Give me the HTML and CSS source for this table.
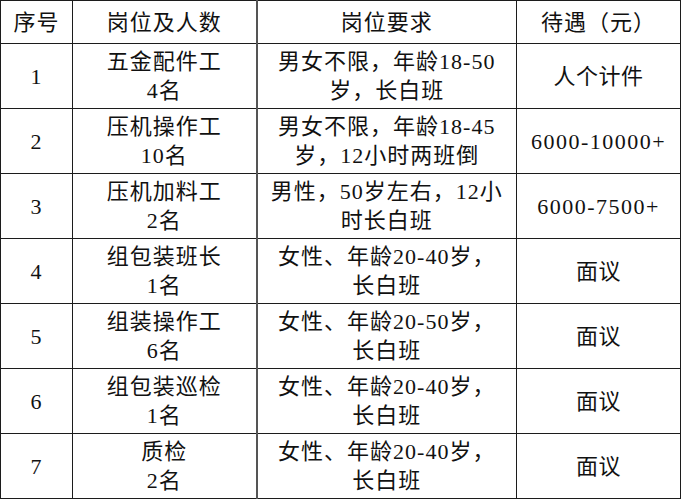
FILE: index.html
```html
<!DOCTYPE html>
<html lang="zh-CN">
<head>
<meta charset="utf-8">
<title>岗位表</title>
<link rel="stylesheet" href="styles.css">
</head>
<body>
<table class="jobs">
  <colgroup>
    <col class="c-no">
    <col class="c-pos">
    <col class="c-req">
    <col class="c-pay">
  </colgroup>
  <thead>
    <tr class="head">
      <th>序号</th>
      <th>岗位及人数</th>
      <th class="req">岗位要求</th>
      <th>待遇（元）</th>
    </tr>
  </thead>
  <tbody>
    <tr>
      <td>1</td>
      <td>五金配件工<br>4名</td>
      <td class="req">男女不限，年龄18-50<br>岁，长白班</td>
      <td class="pay">人个计件</td>
    </tr>
    <tr>
      <td>2</td>
      <td>压机操作工<br>10名</td>
      <td class="req">男女不限，年龄18-45<br>岁，12小时两班倒</td>
      <td class="pay num">6000-10000+</td>
    </tr>
    <tr>
      <td>3</td>
      <td>压机加料工<br>2名</td>
      <td class="req">男性，50岁左右，12小<br>时长白班</td>
      <td class="pay num">6000-7500+</td>
    </tr>
    <tr>
      <td>4</td>
      <td>组包装班长<br>1名</td>
      <td class="req">女性、年龄20-40岁，<br>长白班</td>
      <td class="pay">面议</td>
    </tr>
    <tr>
      <td>5</td>
      <td>组装操作工<br>6名</td>
      <td class="req">女性、年龄20-50岁，<br>长白班</td>
      <td class="pay">面议</td>
    </tr>
    <tr>
      <td>6</td>
      <td>组包装巡检<br>1名</td>
      <td class="req">女性、年龄20-40岁，<br>长白班</td>
      <td class="pay">面议</td>
    </tr>
    <tr>
      <td>7</td>
      <td>质检<br>2名</td>
      <td class="req">女性、年龄20-40岁，<br>长白班</td>
      <td class="pay">面议</td>
    </tr>
  </tbody>
</table>
</body>
</html>
```
FILE: styles.css
```css
html, body {
  margin: 0;
  padding: 0;
  background: #ffffff;
}

.jobs {
  table-layout: fixed;
  border-collapse: collapse;
  width: 680px;
  font-family: "Liberation Serif", "Noto Sans CJK SC", serif;
  font-size: 22px;
  line-height: 29px;
  color: #111111;
}

.c-no { width: 72px; }
.c-pos { width: 184px; }
.c-req { width: 260px; }
.c-pay { width: 164px; }

.jobs th,
.jobs td {
  border: 1px solid #1c1c1c;
  padding: 0;
  text-align: center;
  vertical-align: middle;
  white-space: nowrap;
  letter-spacing: 1px;
  font-weight: normal;
}

.jobs .req {
  border-left: 2px solid #555555;
}

.jobs .pay {
  letter-spacing: 0.5px;
}

.jobs .num {
  letter-spacing: 1.5px;
}

.head {
  height: 43px;
}

.jobs tbody tr {
  height: 65px;
}
```
